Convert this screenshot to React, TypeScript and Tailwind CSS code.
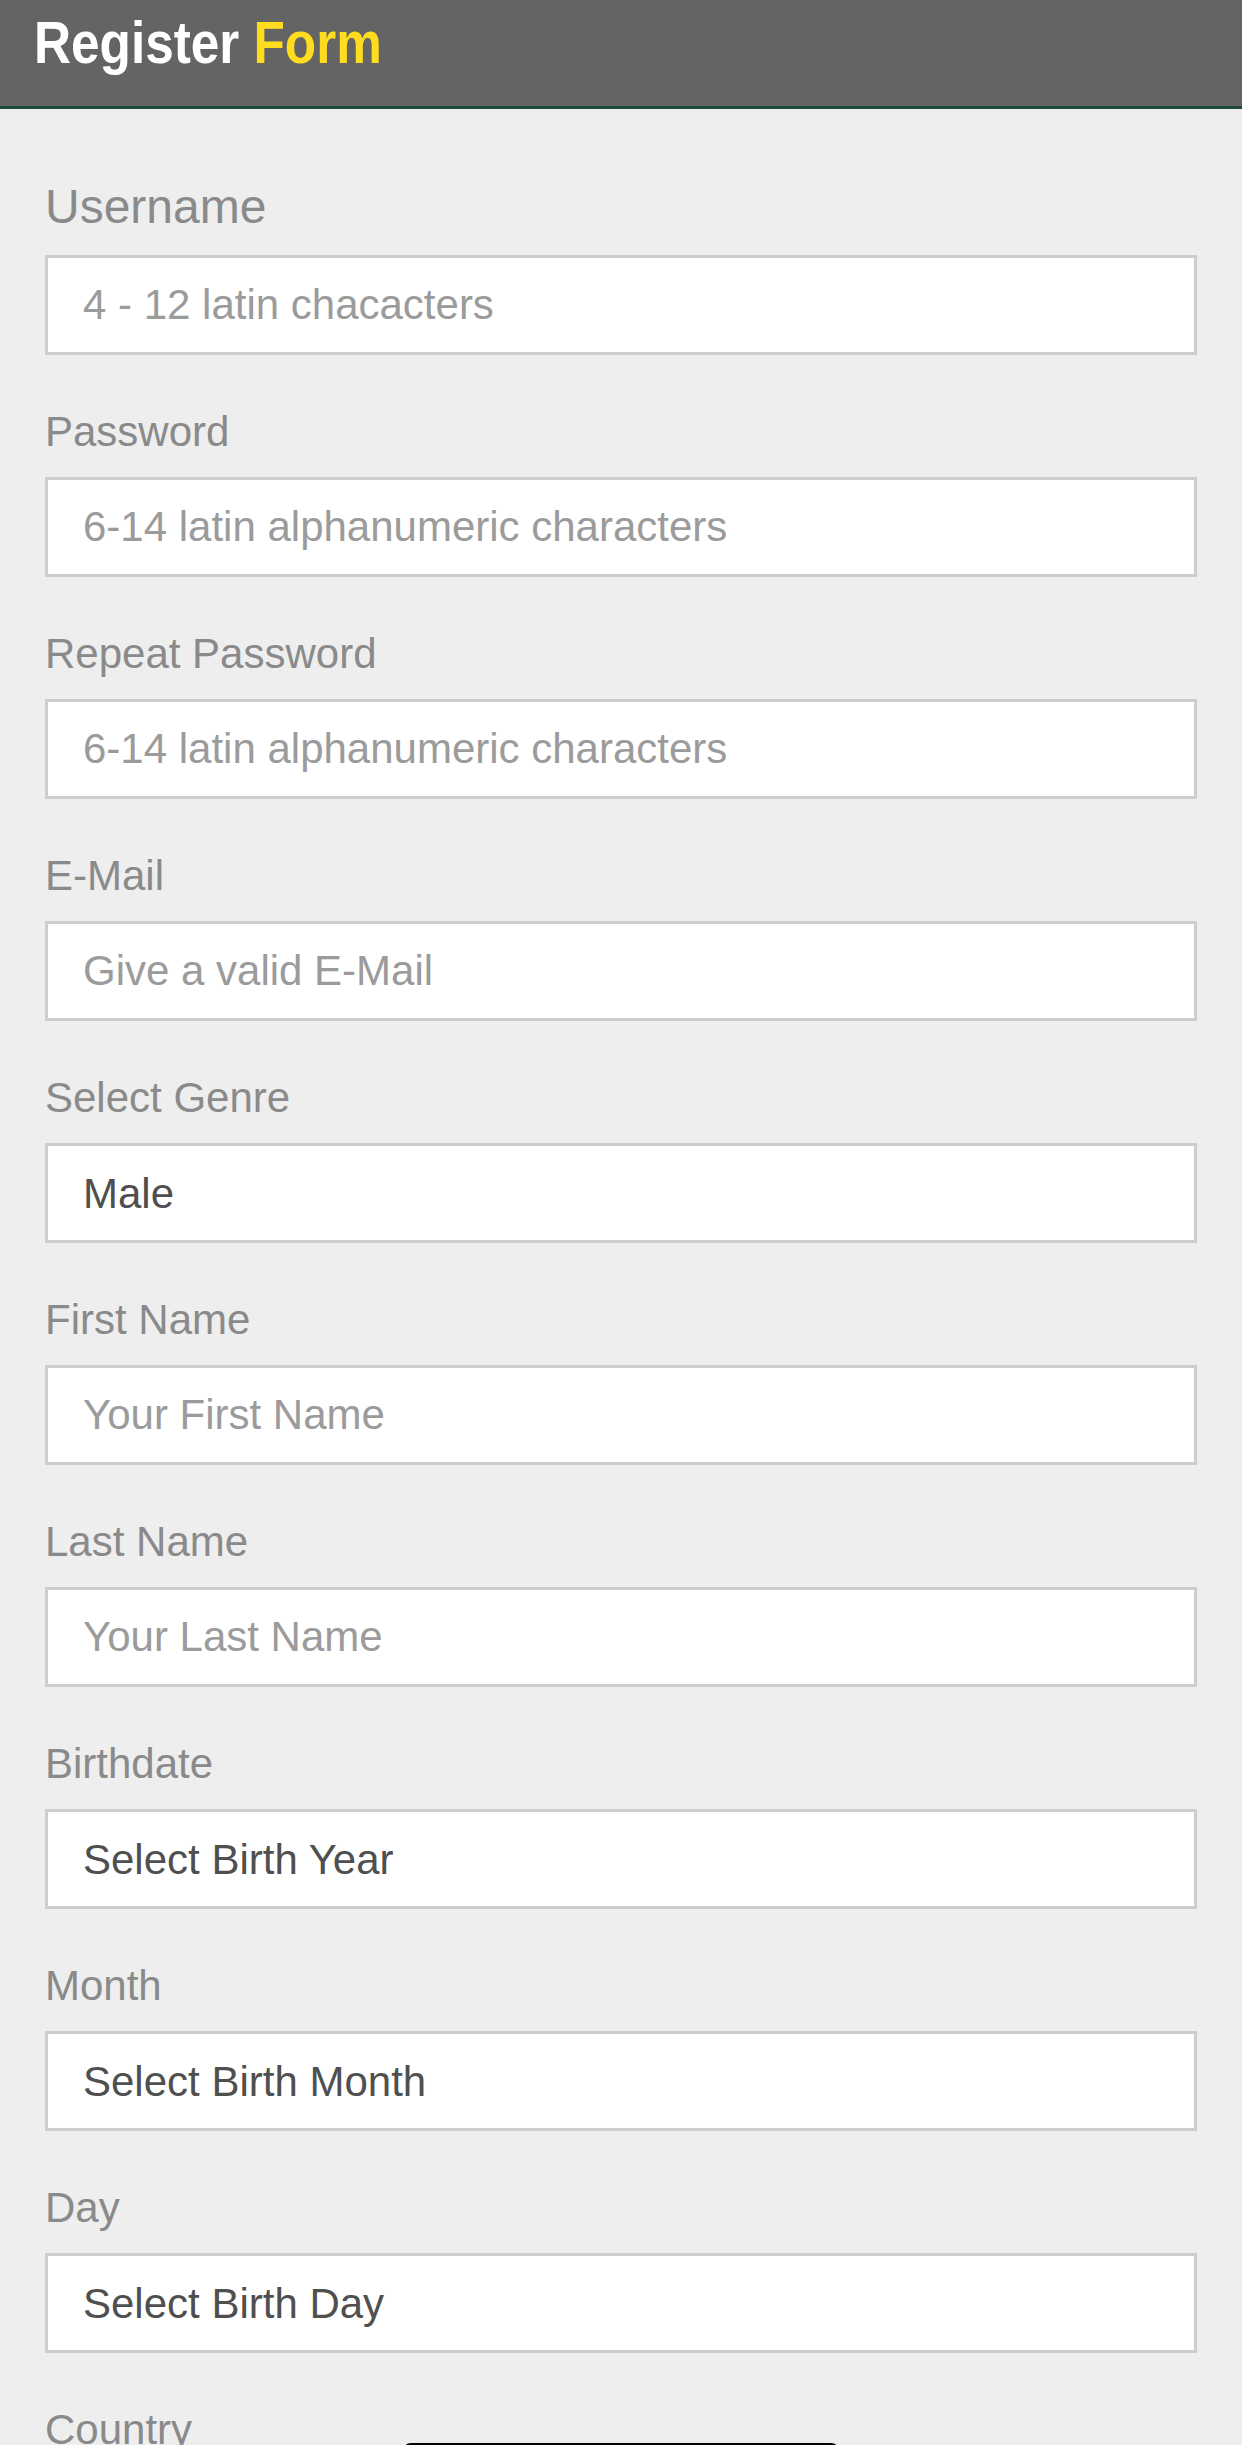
import React from "react";

type Field = {
  label: string;
  text: string;
  kind: "input" | "select";
  big?: boolean;
};

const fields: Field[] = [
  { label: "Username", text: "4 - 12 latin chacacters", kind: "input", big: true },
  { label: "Password", text: "6-14 latin alphanumeric characters", kind: "input" },
  { label: "Repeat Password", text: "6-14 latin alphanumeric characters", kind: "input" },
  { label: "E-Mail", text: "Give a valid E-Mail", kind: "input" },
  { label: "Select Genre", text: "Male", kind: "select" },
  { label: "First Name", text: "Your First Name", kind: "input" },
  { label: "Last Name", text: "Your Last Name", kind: "input" },
  { label: "Birthdate", text: "Select Birth Year", kind: "select" },
  { label: "Month", text: "Select Birth Month", kind: "select" },
  { label: "Day", text: "Select Birth Day", kind: "select" },
];

function FieldRow({ f }: { f: Field }) {
  return (
    <div className="flex flex-col mb-[53px]">
      <label
        className={
          f.big
            ? "text-[48px] leading-[54px] text-[#8a8a8a] mb-[21px]"
            : "text-[42px] leading-[48px] text-[#8a8a8a] mb-[21px]"
        }
      >
        {f.label}
      </label>
      {f.kind === "input" ? (
        <input
          type="text"
          placeholder={f.text}
          className="h-[100px] w-full border-[3px] border-[#cdcdcd] bg-white pl-[35px] text-[42px] text-[#4f4f4f] placeholder:text-[#9b9b9b] outline-none"
        />
      ) : (
        <div className="flex h-[100px] w-full items-center border-[3px] border-[#cdcdcd] bg-white pl-[35px] text-[42px] text-[#4f4f4f]">
          {f.text}
        </div>
      )}
    </div>
  );
}

export default function App() {
  return (
    <div className="min-h-[2600px] w-full bg-[#eeeeee] font-['Liberation_Sans',Arial,Helvetica,sans-serif]">
      <header className="h-[109px] border-b-[3px] border-[#1f4a3a] bg-[#646464] pl-[34px] pt-[13px]">
        <h1 className="origin-left scale-x-[0.855] whitespace-nowrap text-[60px] font-bold leading-[60px]">
          <span className="text-white">Register</span>{" "}
          <span className="text-[#ffdc1e]">Form</span>
        </h1>
      </header>
      <main className="px-[45px] pt-[71px]">
        {fields.map((f) => (
          <FieldRow key={f.label} f={f} />
        ))}
        <div className="flex flex-col">
          <label className="text-[42px] leading-[48px] text-[#8a8a8a]">Country</label>
          <div className="mx-auto -mt-[11px] h-[80px] w-[436px] rounded-t-[8px] bg-black" />
        </div>
      </main>
    </div>
  );
}
